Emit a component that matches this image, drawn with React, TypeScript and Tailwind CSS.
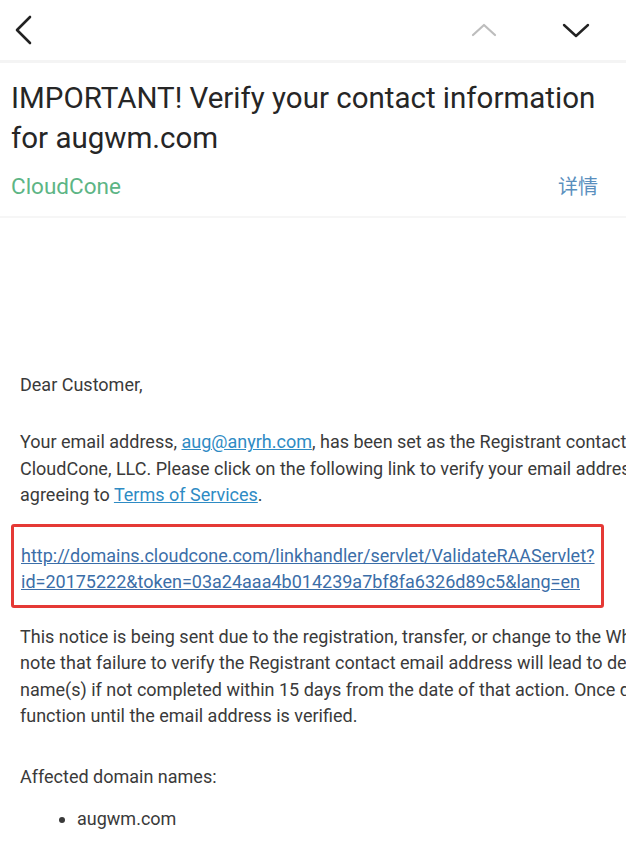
import React from "react";

const body = "font-['Roboto','Noto_Sans',sans-serif]";

export default function App() {
  return (
    <div className="w-[626px] h-[841px] overflow-hidden bg-white font-['Roboto','Noto_Sans_CJK_SC',sans-serif]">
      {/* top bar */}
      <div className="h-[60px] flex items-center justify-between">
        <svg width="48" height="48" viewBox="0 0 48 48">
          <path d="M30 11 L17 24 L30 37" fill="none" stroke="#222" strokeWidth="2.6" strokeLinecap="round" strokeLinejoin="round" />
        </svg>
        <div className="flex items-center">
          <svg width="30" height="20" viewBox="0 0 30 20" className="mr-[62px]">
            <path d="M4 15 L15 5 L26 15" fill="none" stroke="#bdbdbd" strokeWidth="2.2" strokeLinecap="round" strokeLinejoin="round" />
          </svg>
          <svg width="30" height="20" viewBox="0 0 30 20" className="mr-[35px]">
            <path d="M3 5 L15 16 L27 5" fill="none" stroke="#222" strokeWidth="2.4" strokeLinecap="round" strokeLinejoin="round" />
          </svg>
        </div>
      </div>
      <div className="h-[3px] bg-[#f4f4f4]" />

      {/* subject */}
      <div className="px-[11px] pt-[15px]">
        <h1 className="text-[29.5px] leading-[40px] text-[#262626] font-normal">
          IMPORTANT! Verify your contact information
          <br />
          for augwm.com
        </h1>
        <div className="flex items-center justify-between mt-[12px] pb-[12px]">
          <span className="text-[22.5px] text-[#5db585]">CloudCone</span>
          <span className="text-[20px] text-[#5a8fbe] mr-[17px]">详情</span>
        </div>
      </div>
      <div className="h-[2px] bg-[#f6f6f6]" />

      {/* email body */}
      <div className={`${body} text-[18px] leading-[26.5px] text-[#3a3a3a] pt-[154px] overflow-hidden`}>
        <div className="px-[20px] whitespace-nowrap">
          <p>Dear Customer,</p>
          <div className="mt-[31px]">
            <p>
              Your email address, <span className="text-[#2e8bc4] underline">aug@anyrh.com</span>, has been set as the Registrant contact for the domain name(s)
            </p>
            <p>CloudCone, LLC. Please click on the following link to verify your email address. By clicking the link you are</p>
            <p>
              agreeing to <span className="text-[#2e8bc4] underline">Terms of Services</span>.
            </p>
          </div>
        </div>

        <div className="mx-[11px] mt-[15px] w-[593px] border-[3px] border-[#e53935] rounded-[3px] px-[7px] pt-[16px] pb-[9px]">
          <p className="text-[#3b6ea8] underline whitespace-nowrap">http://domains.cloudcone.com/linkhandler/servlet/ValidateRAAServlet?</p>
          <p className="text-[#3b6ea8] underline whitespace-nowrap">id=20175222&amp;token=03a24aaa4b014239a7bf8fa6326d89c5&amp;lang=en</p>
        </div>

        <div className="px-[20px] whitespace-nowrap mt-[16px]">
          <p>This notice is being sent due to the registration, transfer, or change to the Whois information. Please</p>
          <p>note that failure to verify the Registrant contact email address will lead to deactivation of the domain</p>
          <p>name(s) if not completed within 15 days from the date of that action. Once deactivated, your domain will not</p>
          <p>function until the email address is verified.</p>
          <p className="mt-[34px]">Affected domain names:</p>
          <ul className="mt-[16px] pl-[57px] list-disc">
            <li>augwm.com</li>
          </ul>
        </div>
      </div>
    </div>
  );
}
